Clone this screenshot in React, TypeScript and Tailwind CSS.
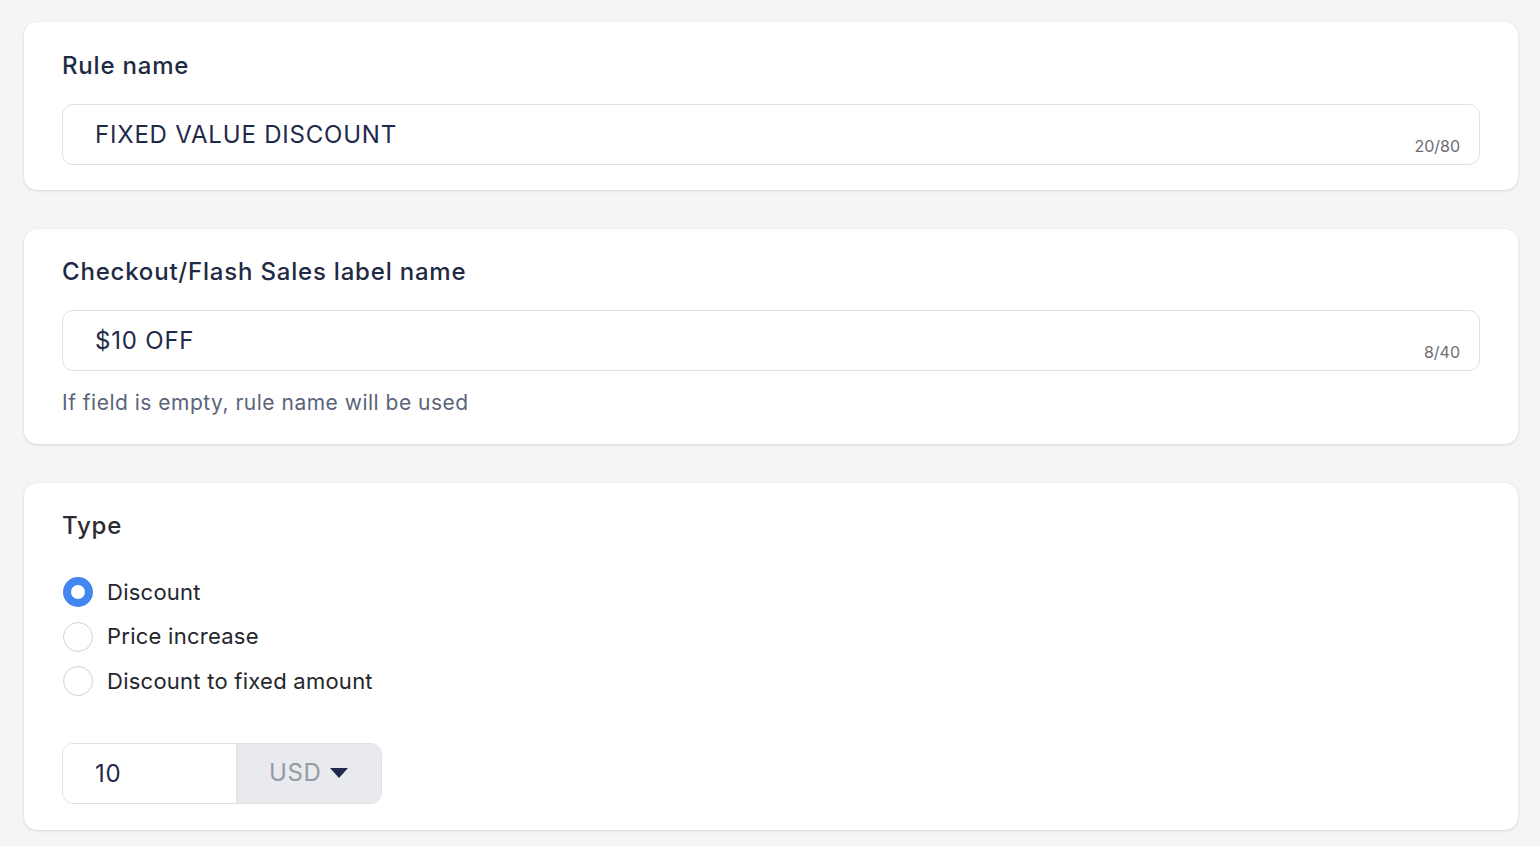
import { useState } from 'react';

const font = { fontFamily: 'Inter, "Noto Sans", sans-serif' };

function Card({ children, className = '' }: { children: React.ReactNode; className?: string }) {
  return (
    <section
      className={`rounded-[13px] bg-white px-[38px] shadow-[0_1px_3px_rgba(0,0,0,0.12),0_0_1px_rgba(0,0,0,0.08)] ${className}`}
    >
      {children}
    </section>
  );
}

function CountedInput({ value, count, max }: { value: string; count: number; max: number }) {
  return (
    <div className="relative mt-[22px] h-[61px] w-full rounded-[11px] border border-[#dfe1e5] bg-white">
      <input
        className="h-full w-full bg-transparent pl-[32px] pr-[90px] text-[24px] tracking-[0.8px] text-[#1f2a4a] outline-none"
        defaultValue={value}
        readOnly
      />
      <span className="absolute right-[19px] bottom-[8px] text-[16px] leading-[20px] text-[#6b6e75]">
        {count}/{max}
      </span>
    </div>
  );
}

function Radio({ checked, label, onSelect }: { checked: boolean; label: string; onSelect: () => void }) {
  return (
    <button type="button" onClick={onSelect} className="flex h-[44.5px] items-center gap-[14px] pl-[1px] text-left">
      {checked ? (
        <span className="flex h-[30px] w-[30px] items-center justify-center rounded-full bg-[#4286f0]">
          <span className="h-[14px] w-[14px] rounded-full bg-white" />
        </span>
      ) : (
        <span className="h-[30px] w-[30px] rounded-full border border-[#cdd2da] bg-white" />
      )}
      <span className="text-[22px] tracking-[0.25px] text-[#24262b]">{label}</span>
    </button>
  );
}

export default function App() {
  const [type, setType] = useState('discount');
  const options = [
    { id: 'discount', label: 'Discount' },
    { id: 'increase', label: 'Price increase' },
    { id: 'fixed', label: 'Discount to fixed amount' },
  ];

  return (
    <div style={font} className="min-h-[846px] bg-[#f5f5f5] px-[24px] pt-[22px] pb-[17px]">
      <div className="flex w-[1494px] flex-col gap-[39px]">
        <Card className="pt-[28px] pb-[25px]">
          <h2 className="text-[24px] leading-[32px] font-medium tracking-[0.8px] text-[#1f2a44]">Rule name</h2>
          <CountedInput value="FIXED VALUE DISCOUNT" count={20} max={80} />
        </Card>

        <Card className="pt-[27px] pb-[27px]">
          <h2 className="text-[24px] leading-[32px] font-medium tracking-[0.8px] text-[#1f2a44]">
            Checkout/Flash Sales label name
          </h2>
          <CountedInput value="$10 OFF" count={8} max={40} />
          <p className="mt-[18px] text-[21px] leading-[28px] tracking-[0.5px] text-[#5b6479]">
            If field is empty, rule name will be used
          </p>
        </Card>

        <Card className="pt-[27px] pb-[26px]">
          <h2 className="text-[24px] leading-[32px] font-medium tracking-[0.8px] text-[#2a2c31]">Type</h2>
          <div className="mt-[28px] flex flex-col">
            {options.map((o) => (
              <Radio key={o.id} label={o.label} checked={type === o.id} onSelect={() => setType(o.id)} />
            ))}
          </div>
          <div className="mt-[39px] flex h-[61px] w-[320px] overflow-hidden rounded-[11px] border border-[#dfe1e5]">
            <input
              className="h-full w-[174px] border-r border-[#dfe1e5] bg-white pl-[32px] text-[24px] tracking-[0.8px] text-[#1f2a4a] outline-none"
              defaultValue="10"
              readOnly
            />
            <button type="button" className="flex flex-1 items-center gap-[9px] bg-[#e9eaee] pl-[32px]">
              <span className="text-[24px] tracking-[0.6px] text-[#9399a5]">USD</span>
              <svg width="18" height="10" viewBox="0 0 18 10">
                <path d="M0 0h18L9 10z" fill="#1f2a4a" />
              </svg>
            </button>
          </div>
        </Card>
      </div>
    </div>
  );
}
